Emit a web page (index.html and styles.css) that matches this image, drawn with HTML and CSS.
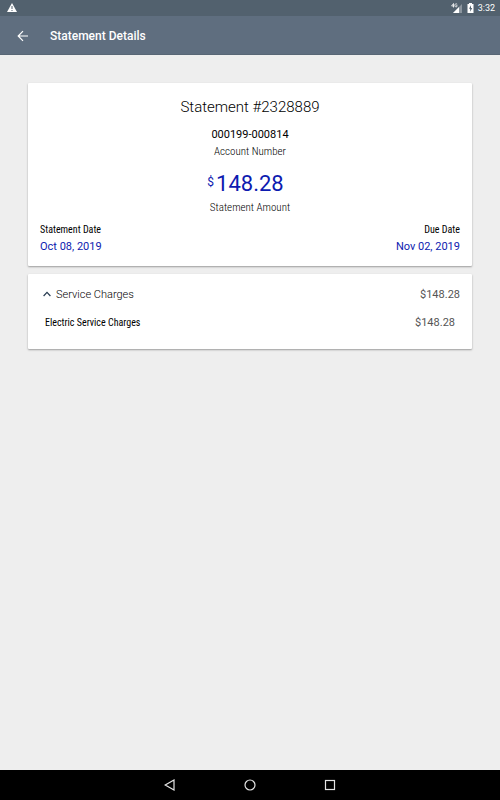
FILE: index.html
```html
<!DOCTYPE html>
<html lang="en">
<head>
  <meta charset="UTF-8" />
  <meta name="viewport" content="width=device-width, initial-scale=1.0"/>
  <title>Statement Details</title>
  <link rel="stylesheet" href="styles.css">
</head>
<body>

  <div class="status-bar">
    <svg class="warning" width="10" height="10" viewBox="0 0 10 10" aria-hidden="true">
      <path d="M5 0 L10 9 H0 Z" fill="#fff"/>
      <path d="M5 3 V6 M5 7 V8" stroke="#52616e" stroke-width="1"/>
    </svg>
    <div class="status-icons">
      <svg width="12" height="11" viewBox="0 0 12 11" aria-hidden="true">
        <path d="M11 1 V10 H2 Z" fill="#8b959e"/>
        <path d="M8 4 V10 H2 Z" fill="#fff"/>
        <path d="M2.5 .5 L.6 3 H3.3 M2.5 .5 V4.5 M6.2 1.2 C4.5 .2 3.8 1.2 3.9 2.5 C4 4.4 6.2 4.3 6.2 2.7 H5.2" fill="none" stroke="#fff" stroke-width=".8"/>
      </svg>
      <svg width="7" height="10" viewBox="0 0 7 10" aria-hidden="true">
        <path d="M2 0 H5 V1 H6.5 V10 H.5 V1 H2 Z" fill="#fff"/>
        <path d="M4 2.3 L2 5.8 H3.2 V8.7 L5.2 5 H4 Z" fill="#52616e"/>
      </svg>
      <span class="clock">3:32</span>
    </div>
  </div>

  <header class="app-bar">
    <button class="back" type="button" aria-label="Back">
      <svg width="12" height="12" viewBox="0 0 12 12" aria-hidden="true">
        <path d="M11 6 H1.5 M6 1.2 L1.2 6 L6 10.8" fill="none" stroke="#fff" stroke-width="1.2"/>
      </svg>
    </button>
    <h1>Statement Details</h1>
  </header>

  <main>
    <section class="card summary">
      <h2>Statement #2328889</h2>
      <p class="account">000199-000814</p>
      <p class="caption">Account Number</p>
      <p class="amount"><span class="currency">$</span>148.28</p>
      <p class="caption">Statement Amount</p>
      <div class="dates">
        <div>
          <p class="label">Statement Date</p>
          <p class="date">Oct 08, 2019</p>
        </div>
        <div class="due">
          <p class="label">Due Date</p>
          <p class="date">Nov 02, 2019</p>
        </div>
      </div>
    </section>

    <section class="card charges">
      <button class="charges-toggle" type="button" aria-expanded="true" aria-controls="charge-list">
        <svg width="8" height="8" viewBox="0 0 8 8" aria-hidden="true">
          <path d="M.6 5 L4 1.4 L7.4 5" fill="none" stroke="#263a50" stroke-width="1.2"/>
        </svg>
        <span class="charges-title">Service Charges</span>
        <span class="price">$148.28</span>
      </button>
      <div class="charge-row" id="charge-list">
        <span class="label">Electric Service Charges</span>
        <span class="price">$148.28</span>
      </div>
    </section>
  </main>

  <nav class="nav-bar">
    <button type="button" aria-label="Back">
      <svg width="12" height="12" viewBox="0 0 12 12" aria-hidden="true">
        <path d="M10 1 V11 L1.2 6 Z" fill="none" stroke="#e4e4e4" stroke-width="1.2"/>
      </svg>
    </button>
    <button type="button" aria-label="Home">
      <svg width="12" height="12" viewBox="0 0 12 12" aria-hidden="true">
        <circle cx="6" cy="6" r="5" fill="none" stroke="#e4e4e4" stroke-width="1.2"/>
      </svg>
    </button>
    <button type="button" aria-label="Recent apps">
      <svg width="12" height="12" viewBox="0 0 12 12" aria-hidden="true">
        <rect x="1.5" y="1.5" width="9" height="9" fill="none" stroke="#e4e4e4" stroke-width="1.2"/>
      </svg>
    </button>
  </nav>

  <script>
    const toggle = document.querySelector('.charges-toggle');
    const list = document.getElementById('charge-list');

    toggle.addEventListener('click', () => {
      list.hidden = !list.hidden;
      toggle.setAttribute('aria-expanded', String(!list.hidden));
    });
  </script>

</body>
</html>
```
FILE: styles.css
```css
* {
  margin: 0;
  padding: 0;
  box-sizing: border-box;
}

body {
  display: flex;
  flex-direction: column;
  min-height: 100vh;
  font-family: Roboto, "Liberation Sans", sans-serif;
  font-size: 11px;
  color: #000;
  background: #eee;
}

button {
  font: inherit;
  color: inherit;
  background: none;
  border: none;
  cursor: pointer;
}

svg {
  display: block;
  flex-shrink: 0;
}

.status-bar {
  display: flex;
  align-items: center;
  justify-content: space-between;
  height: 16px;
  padding: 0 5px 0 7px;
  background: #52616e;
}

.status-icons {
  display: flex;
  align-items: center;
  gap: 4px;
}

.clock {
  font-size: 9px;
  color: #fff;
}

.app-bar {
  display: flex;
  align-items: center;
  height: 39px;
  padding: 2px 12px 0;
  color: #fff;
  background: #5f6e7f;
  border-bottom: 1px solid #586675;
}

.back {
  width: 38px;
  padding: 5px;
}

.app-bar h1 {
  font-size: 12px;
  font-weight: 500;
  line-height: 18px;
}

main {
  flex: 1;
  padding: 28px 28px 20px;
}

.card {
  margin-bottom: 8px;
  background: #fff;
  border-radius: 1px;
  box-shadow: 0 1px 2px rgba(0, 0, 0, 0.35);
}

.summary {
  padding: 14px 12px 10px;
  text-align: center;
}

.summary h2 {
  margin-bottom: 10px;
  font-size: 15px;
  font-weight: 300;
  line-height: 20px;
}

.account {
  font-size: 11px;
  line-height: 16px;
}

.caption {
  font-family: "Roboto Condensed", Roboto, sans-serif;
  font-size: 11px;
  font-weight: 300;
  line-height: 18px;
}

.amount {
  display: flex;
  justify-content: center;
  gap: 2px;
  margin: 8px 9px 0 0;
  font-size: 22px;
  line-height: 30px;
  color: #0d1bb0;
}

.currency {
  font-size: 12px;
  line-height: 26px;
}

.dates {
  display: flex;
  justify-content: space-between;
  margin-top: 5px;
  text-align: left;
}

.due {
  text-align: right;
}

.label {
  font-family: "Roboto Condensed", Roboto, sans-serif;
  font-size: 10px;
  line-height: 16px;
}

.date {
  font-size: 11px;
  line-height: 18px;
  color: #0d1bb0;
}

.charges {
  padding: 12px 12px 17px;
}

.charges-toggle {
  display: flex;
  align-items: center;
  gap: 5px;
  width: 100%;
  padding-left: 3px;
}

.charges-title {
  font-weight: 300;
  line-height: 18px;
}

.price {
  margin-left: auto;
  font-size: 11px;
  line-height: 18px;
  color: #555;
}

.charge-row {
  display: flex;
  align-items: center;
  margin-top: 10px;
  padding: 0 5px;
}

.charge-row[hidden] {
  display: none;
}

.nav-bar {
  display: flex;
  align-items: center;
  justify-content: center;
  gap: 58px;
  height: 30px;
  background: #000;
}

.nav-bar button {
  padding: 5px;
}
```
